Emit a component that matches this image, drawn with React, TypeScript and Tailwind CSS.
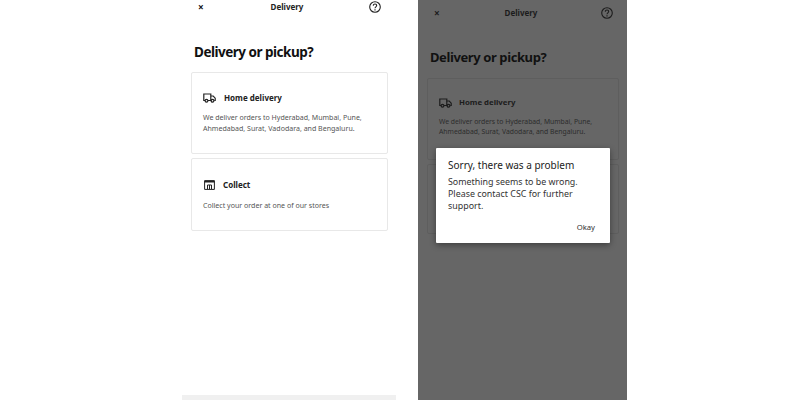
import React from "react";

const Truck = ({ c }: { c: string }) => (
  <svg width="13" height="10" viewBox="0 0 13 10" fill="none" stroke={c} strokeWidth="1.2" className="shrink-0">
    <path d="M2 7.500H.8V1h7v6.500H5" />
    <path d="M7.800 3h2.400l2 2.200v2.300h-1" />
    <circle cx="3.500" cy="7.800" r="1.400" />
    <circle cx="9.500" cy="7.800" r="1.400" />
  </svg>
);

const Store = ({ c }: { c: string }) => (
  <svg width="11" height="10" viewBox="0 0 11 10" fill="none" stroke={c} className="shrink-0">
    <path d="M.6.700h9.800v8.700H.6z" />
    <path d="M.6 1.500h9.800" strokeWidth="2" />
    <path d="M3.500 9V5h4v4M5.500 5v4" strokeWidth="1" />
  </svg>
);

const Help = ({ c, size }: { c: string; size: number }) => (
  <svg width={size} height={size} viewBox="0 0 12 12" fill="none" stroke={c} className="shrink-0">
    <circle cx="6" cy="6" r="5.300" strokeWidth="1.100" />
    <path d="M4.300 4.700c0-1 .8-1.700 1.700-1.700s1.700.7 1.700 1.600c0 1.200-1.700 1.300-1.700 2.700" strokeWidth="1.100" />
    <path d="M6 8.300v1.100" strokeWidth="1.200" />
  </svg>
);

const font = { fontFamily: '"Noto Sans", sans-serif' };

export default function App() {
  return (
    <div className="flex h-[400px] w-[800px] overflow-hidden bg-white" style={font}>
      {/* left phone */}
      <div className="ml-[182px] flex h-[400px] w-[214px] shrink-0 flex-col">
        <div className="flex h-[14px] items-center justify-between pl-[16px] pr-[15px] text-[#111]">
          <span className="flex w-[5px] text-[10px] font-bold leading-none">×</span>
          <span className="ml-[2px] text-[8px] font-bold leading-none text-[#222]">Delivery</span>
          <Help c="#222" size={12} />
        </div>
        <h1 className="mt-[28px] pl-[12px] text-[13.500px] font-bold leading-[20px] tracking-[-0.5px] text-[#111]">
          Delivery or pickup?
        </h1>
        <div className="mt-[10px] flex flex-col gap-[4px] pl-[9px] pr-[8px]">
          <div className="h-[82px] rounded-[2px] border border-[#e8e8e8] pl-[11px] pr-[8px] pt-[19px]">
            <div className="flex h-[12px] items-center gap-[8px]">
              <Truck c="#222" />
              <span className="text-[8px] font-bold leading-none text-[#222]">Home delivery</span>
            </div>
            <p className="mt-[8px] text-[7.050px] leading-[10.500px] text-[#555]">
              We deliver orders to Hyderabad, Mumbai, Pune, Ahmedabad, Surat, Vadodara, and Bengaluru.
            </p>
          </div>
          <div className="h-[73px] rounded-[2px] border border-[#e8e8e8] pl-[12px] pr-[8px] pt-[20px]">
            <div className="flex h-[12px] items-center gap-[8px]">
              <Store c="#222" />
              <span className="text-[8px] font-bold leading-none text-[#222]">Collect</span>
            </div>
            <p className="mt-[9px] -ml-[1px] text-[7.050px] leading-[10.500px] text-[#555]">
              Collect your order at one of our stores
            </p>
          </div>
        </div>
        <div className="mt-auto h-[5px] bg-[#f0f0f0]" />
      </div>

      {/* right phone */}
      <div className="relative ml-[22px] h-[400px] w-[209px] shrink-0 bg-[#666666]">
        <div className="flex h-[26px] items-center justify-between pl-[16px] pr-[14px]">
          <span className="flex w-[5px] text-[10px] font-bold leading-none text-[#1c1c1c]">×</span>
          <span className="ml-[2px] text-[8px] font-bold leading-none text-[#1c1c1c]">Delivery</span>
          <Help c="#1c1c1c" size={12} />
        </div>
        <h1 className="mt-[21px] pl-[12px] text-[13px] font-bold leading-[20px] tracking-[-0.4px] text-[#111]">
          Delivery or pickup?
        </h1>
        <div className="mt-[11px] flex flex-col gap-[4px] pl-[9px] pr-[8px]">
          <div className="h-[82px] rounded-[2px] border border-[#5e5e5e] pl-[11px] pr-[8px] pt-[18px]">
            <div className="flex h-[12px] items-center gap-[7px]">
              <Truck c="#1c1c1c" />
              <span className="text-[7.800px] font-bold leading-none text-[#1c1c1c]">Home delivery</span>
            </div>
            <p className="mt-[8px] text-[6.800px] leading-[10px] text-[#2c2c2c]">
              We deliver orders to Hyderabad, Mumbai, Pune, Ahmedabad, Surat, Vadodara, and Bengaluru.
            </p>
          </div>
          <div className="h-[70px] rounded-[2px] border border-[#5e5e5e]" />
        </div>

        {/* dialog */}
        <div className="absolute left-[18px] top-[148px] h-[95px] w-[174px] rounded-[1px] bg-white pl-[12px] pr-[15px] pt-[9px] shadow-[0_2px_6px_rgba(0,0,0,0.4)]">
          <p className="text-[10px] leading-[16px] text-[#222]">Sorry, there was a problem</p>
          <p className="mt-[3px] text-[8.900px] leading-[12px] text-[#333]">
            Something seems to be wrong. Please contact CSC for further support.
          </p>
          <p className="mt-[9px] text-right text-[7.700px] leading-[12px] text-[#333]">Okay</p>
        </div>
      </div>
    </div>
  );
}
